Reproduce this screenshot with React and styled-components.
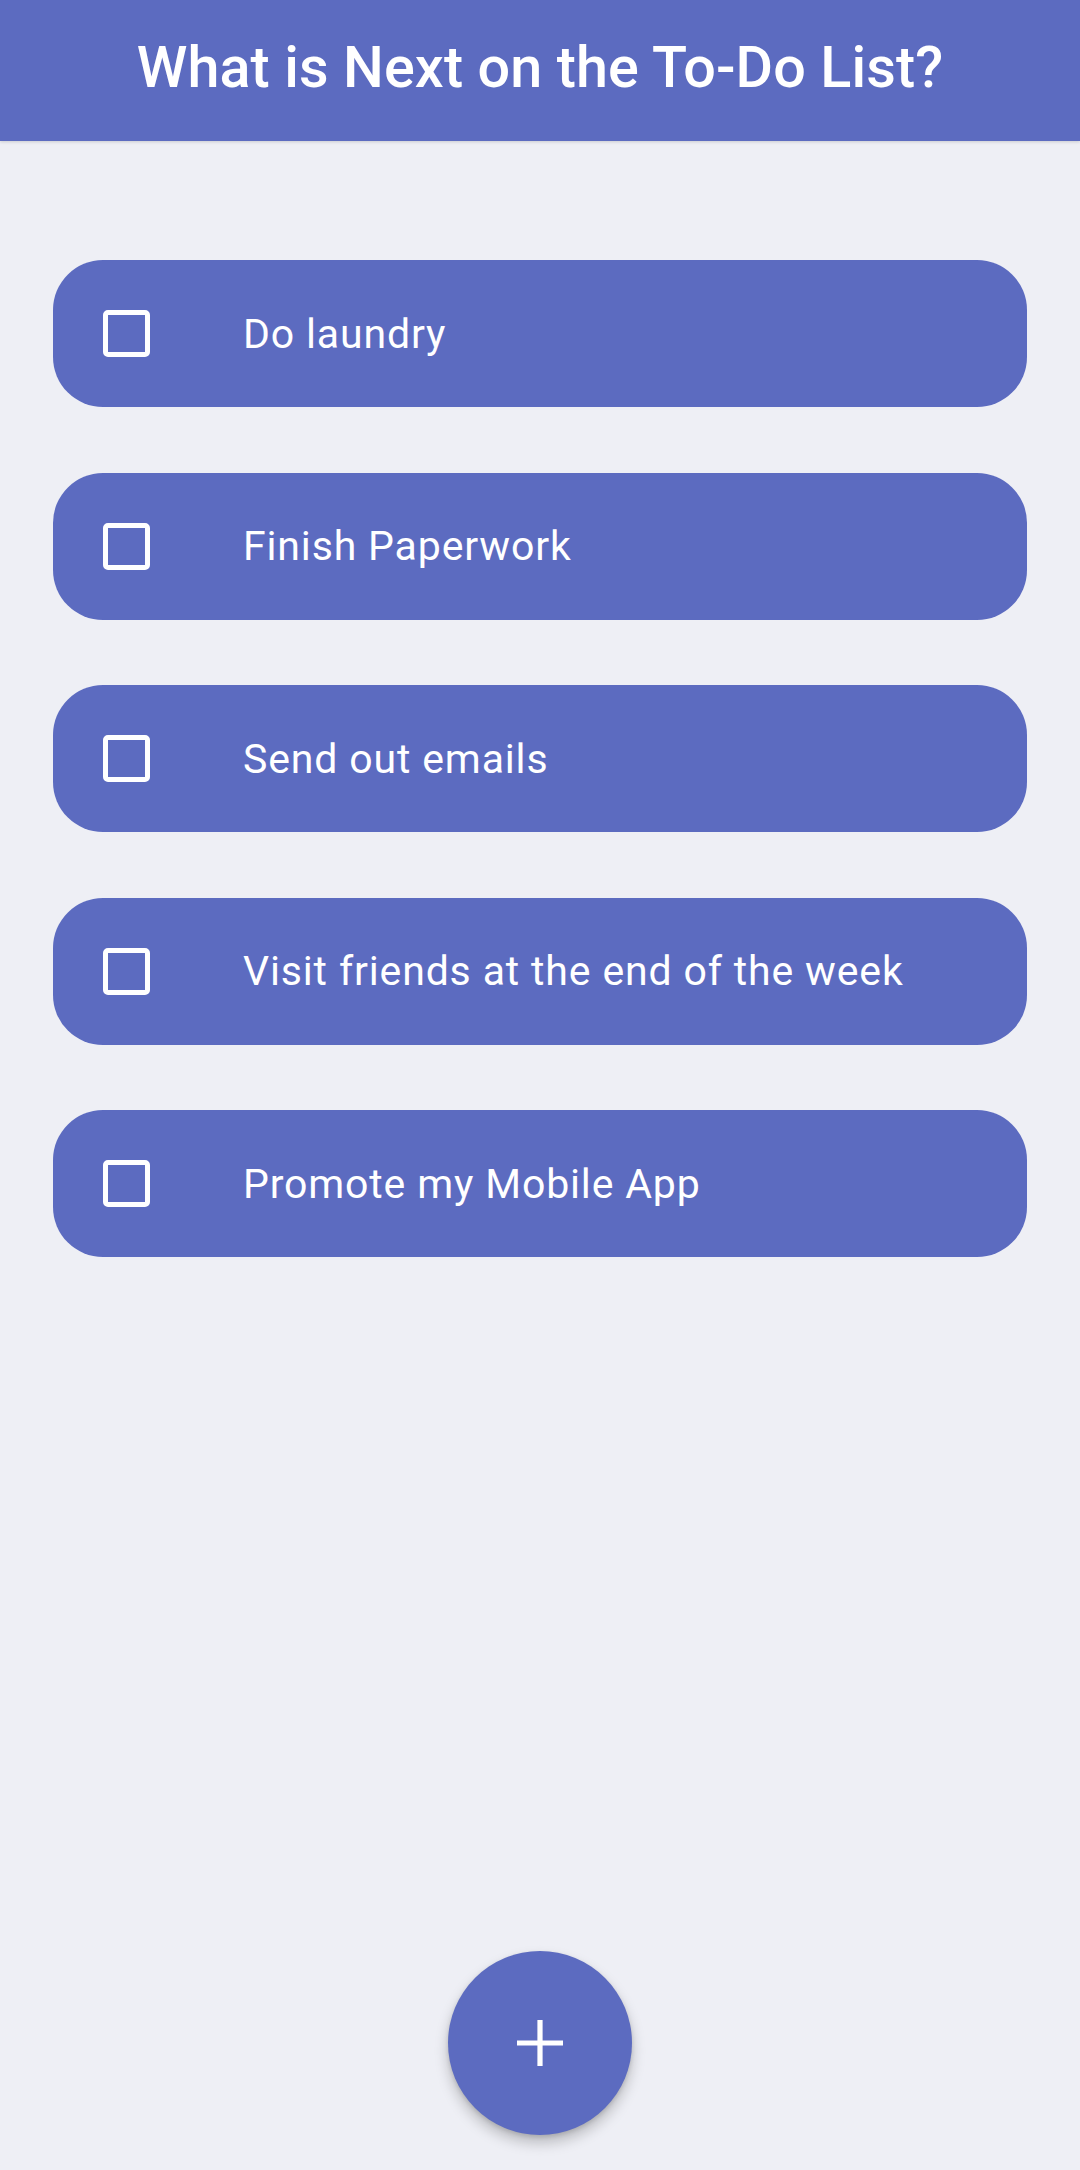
import React from 'react';
import styled, { createGlobalStyle } from 'styled-components';

const GlobalStyle = createGlobalStyle`
  html, body {
    margin: 0;
    padding: 0;
    background: #eeeff5;
    font-family: Roboto, "Noto Sans", sans-serif;
  }
`;

const tasks = [
  'Do laundry',
  'Finish Paperwork',
  'Send out emails',
  'Visit friends at the end of the week',
  'Promote my Mobile App',
];

const App = () => {
  const [done, setDone] = React.useState({});

  return (
    <Page>
      <GlobalStyle />
      <Header>
        <Title>What is Next on the To-Do List?</Title>
      </Header>
      <List>
        {tasks.map((task) => (
          <Item key={task} onClick={() => setDone({ ...done, [task]: !done[task] })}>
            <Box checked={done[task]} />
            <Label>{task}</Label>
          </Item>
        ))}
      </List>
      <Footer>
        <Fab aria-label="Add task">
          <svg width="46" height="46" viewBox="0 0 46 46">
            <path d="M23 0v46M0 23h46" stroke="#fff" strokeWidth="5.2" />
          </svg>
        </Fab>
      </Footer>
    </Page>
  );
};

const Page = styled.div`
  display: flex;
  flex-direction: column;
  min-height: 100vh;
`;

const Header = styled.header`
  display: flex;
  align-items: center;
  justify-content: center;
  height: 141px;
  background: #5c6bc0;
  box-shadow: 0 1px 3px rgba(0, 0, 0, 0.15);
`;

const Title = styled.h1`
  margin: 0;
  color: #fff;
  font-size: 57.5px;
  font-weight: 500;
  letter-spacing: 0.1px;
  padding-bottom: 6px;
`;

const List = styled.ul`
  display: flex;
  flex-direction: column;
  gap: 65.6px;
  list-style: none;
  margin: 0;
  padding: 119px 53px 0;
`;

const Item = styled.li`
  display: flex;
  align-items: center;
  gap: 93px;
  height: 147px;
  padding: 0 50px;
  border-radius: 50px;
  background: #5c6bc0;
  cursor: pointer;
`;

const Box = styled.span`
  flex: none;
  width: 47px;
  height: 47px;
  box-sizing: border-box;
  border: 5px solid #fff;
  border-radius: 5px;
  background: ${(p) => (p.checked ? '#fff' : 'transparent')};
`;

const Label = styled.span`
  color: #fff;
  font-size: 41px;
  font-weight: 400;
  letter-spacing: 0.85px;
`;

const Footer = styled.div`
  display: flex;
  justify-content: center;
  margin-top: auto;
  padding-bottom: 35px;
`;

const Fab = styled.button`
  display: flex;
  align-items: center;
  justify-content: center;
  width: 184px;
  height: 184px;
  border: none;
  border-radius: 50%;
  background: #5c6bc0;
  box-shadow: 0 8px 14px rgba(0, 0, 0, 0.22), 0 2px 4px rgba(0, 0, 0, 0.12);
  cursor: pointer;
`;

export default App;
